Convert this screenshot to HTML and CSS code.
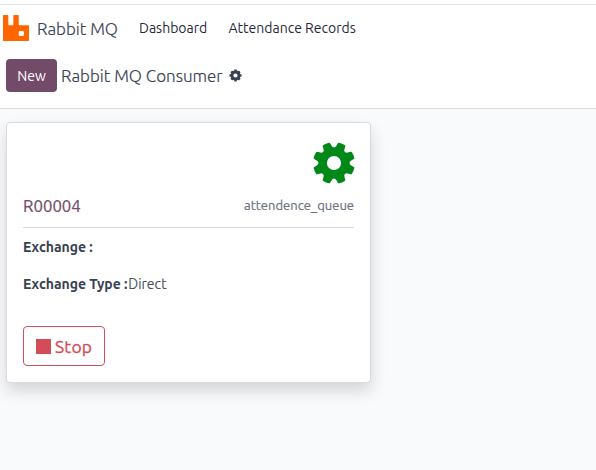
FILE: index.html
```html
<!DOCTYPE html>
<html lang="en">
<head>
<meta charset="utf-8">
<title>Rabbit MQ Consumer</title>
<link rel="stylesheet" href="styles.css">
</head>
<body>
<svg class="defs" aria-hidden="true">
  <symbol id="gear" viewBox="-21 -21 42 42">
    <circle r="11.3" fill="none" stroke="currentColor" stroke-width="8.4"/>
    <g id="pair"><path id="tooth" d="M-5.800-14Q-4.600-15-4.400-16.500L-4-19.800Q-3.900-20.600-3-20.700Q0-21.200 3-20.700Q3.900-20.600 4-19.800L4.400-16.500Q4.600-15 5.800-14Z" fill="currentColor" transform="rotate(22.5)"/><use href="#tooth" transform="rotate(45)"/></g>
    <use href="#pair" transform="rotate(90)"/><use href="#pair" transform="rotate(180)"/><use href="#pair" transform="rotate(270)"/>
  </symbol>
  <symbol id="cog" viewBox="-6.500 -6.500 13 13">
    <circle r="3.500" fill="none" stroke="currentColor" stroke-width="2.800"/>
    <path d="M0-6V-4M0 4V6M-6 0H-4M4 0H6M-4.240-4.240-3-3M3 3 4.240 4.240M4.240-4.240 3-3M-3 3-4.240 4.240" fill="none" stroke="currentColor" stroke-width="2.500"/>
  </symbol>
</svg>
<header class="top">
  <nav class="nav">
    <svg class="logo" viewBox="0 0 26 26"><path fill="#f60" fill-rule="evenodd" d="M.7 0H4.600Q5.300 0 5.300.7V9.500Q5.300 10.300 6 10.300H9.600Q10.300 10.300 10.300 9.500V.7Q10.300 0 11 0H15Q15.700 0 15.700.7V9.500Q15.700 10.300 16.400 10.300H25.300Q26 10.300 26 11V25.300Q26 26 25.300 26H.7Q0 26 0 25.300V.7Q0 0 .7 0ZM17 16Q15.700 16 15.700 17.300V19.700Q15.700 21 17 21H19.600Q20.900 21 20.900 19.700V17.300Q20.900 16 19.600 16Z"/></svg>
    <span class="brand">Rabbit MQ</span>
    <a class="link dash">Dashboard</a>
    <a class="link records">Attendance Records</a>
  </nav>
  <div class="control">
    <button class="new">New</button>
    <h1 class="title">Rabbit MQ Consumer</h1>
    <svg class="cog"><use href="#cog"/></svg>
  </div>
</header>
<main class="content">
  <article class="card">
    <div class="state"><svg class="wheel"><use href="#gear"/></svg></div>
    <div class="heading"><span class="code">R00004</span><span class="queue">attendence_queue</span></div>
    <p class="field"><b class="exchange">Exchange :</b></p>
    <p class="field"><b class="type">Exchange Type :</b><span class="value">Direct</span></p>
    <button class="stop"><i class="square"></i><span>Stop</span></button>
  </article>
</main>
</body>
</html>
```
FILE: styles.css
```css
* { box-sizing: border-box; }
body { margin: 0; height: 470px; overflow: hidden; background: #f9fafc; color: #374151; font: 14px/20px "Ubuntu", "Noto Sans", sans-serif; }
.defs { position: absolute; width: 0; height: 0; }
button { font: inherit; padding: 0; }
.top { height: 109px; margin: 0; padding-top: 4px; background: #fff; border-bottom: 1px solid #d8dadd; }
.nav { height: 47px; border-top: 1px solid #e4e5e7; padding: 0 0 0 3px; display: flex; align-items: center; white-space: nowrap; }
.logo { width: 26px; height: 26px; }
.brand { width: 102px; margin: 2px 0 0 8px; font-size: 17px; font-weight: 300; -webkit-text-stroke: .15px; }
.link { color: #1f2937; }
.dash { width: 89.5px; }
.control { display: flex; align-items: center; height: 33px; margin-top: 8px; padding-left: 6px; white-space: nowrap; }
.new { width: 51px; height: 33px; border: 0; border-radius: 4px; background: #714b67; color: #fff; }
.title { width: 168px; margin: 0 0 0 4px; font-size: 17px; font-weight: 300; -webkit-text-stroke: .15px; }
.cog { width: 13px; height: 13px; color: #374151; }
.content { padding: 13px 6px; }
.card { width: 365px; height: 261px; padding: 19px 16px; background: #fff; border: 1px solid #d8dadd; border-radius: 4px; box-shadow: 0 8px 16px rgba(0,0,0,.15); }
.state { height: 42px; display: flex; justify-content: flex-end; }
.wheel { width: 42px; height: 42px; margin: -.5px -1px 0 0; color: #008818; }
.heading { display: flex; justify-content: space-between; align-items: center; height: 44px; border-bottom: 1px solid #d8dadd; }
.code { color: #714b67; font-size: 16.800px; -webkit-text-stroke: .2px; }
.queue { margin-top: -2px; color: #6b7280; font-size: 13px; -webkit-text-stroke: .2px; }
.field { height: 37px; margin: 0; padding-top: 9px; white-space: nowrap; }
.field b { font-weight: 600; }
.type { margin-right: .7px; }
.value { font-weight: 300; letter-spacing: .1px; -webkit-text-stroke: .15px; }
.stop { display: flex; align-items: center; width: 82px; height: 40px; margin-top: 24px; padding-left: 12px; border: 1px solid #d44c59; border-radius: 4px; background: #fff; color: #d44c59; font-size: 17.500px; }
.stop span { margin-top: 2px; -webkit-text-stroke: .3px; letter-spacing: .2px; }
.square { width: 15px; height: 15px; margin-right: 4px; background: #d44c59; }
```
